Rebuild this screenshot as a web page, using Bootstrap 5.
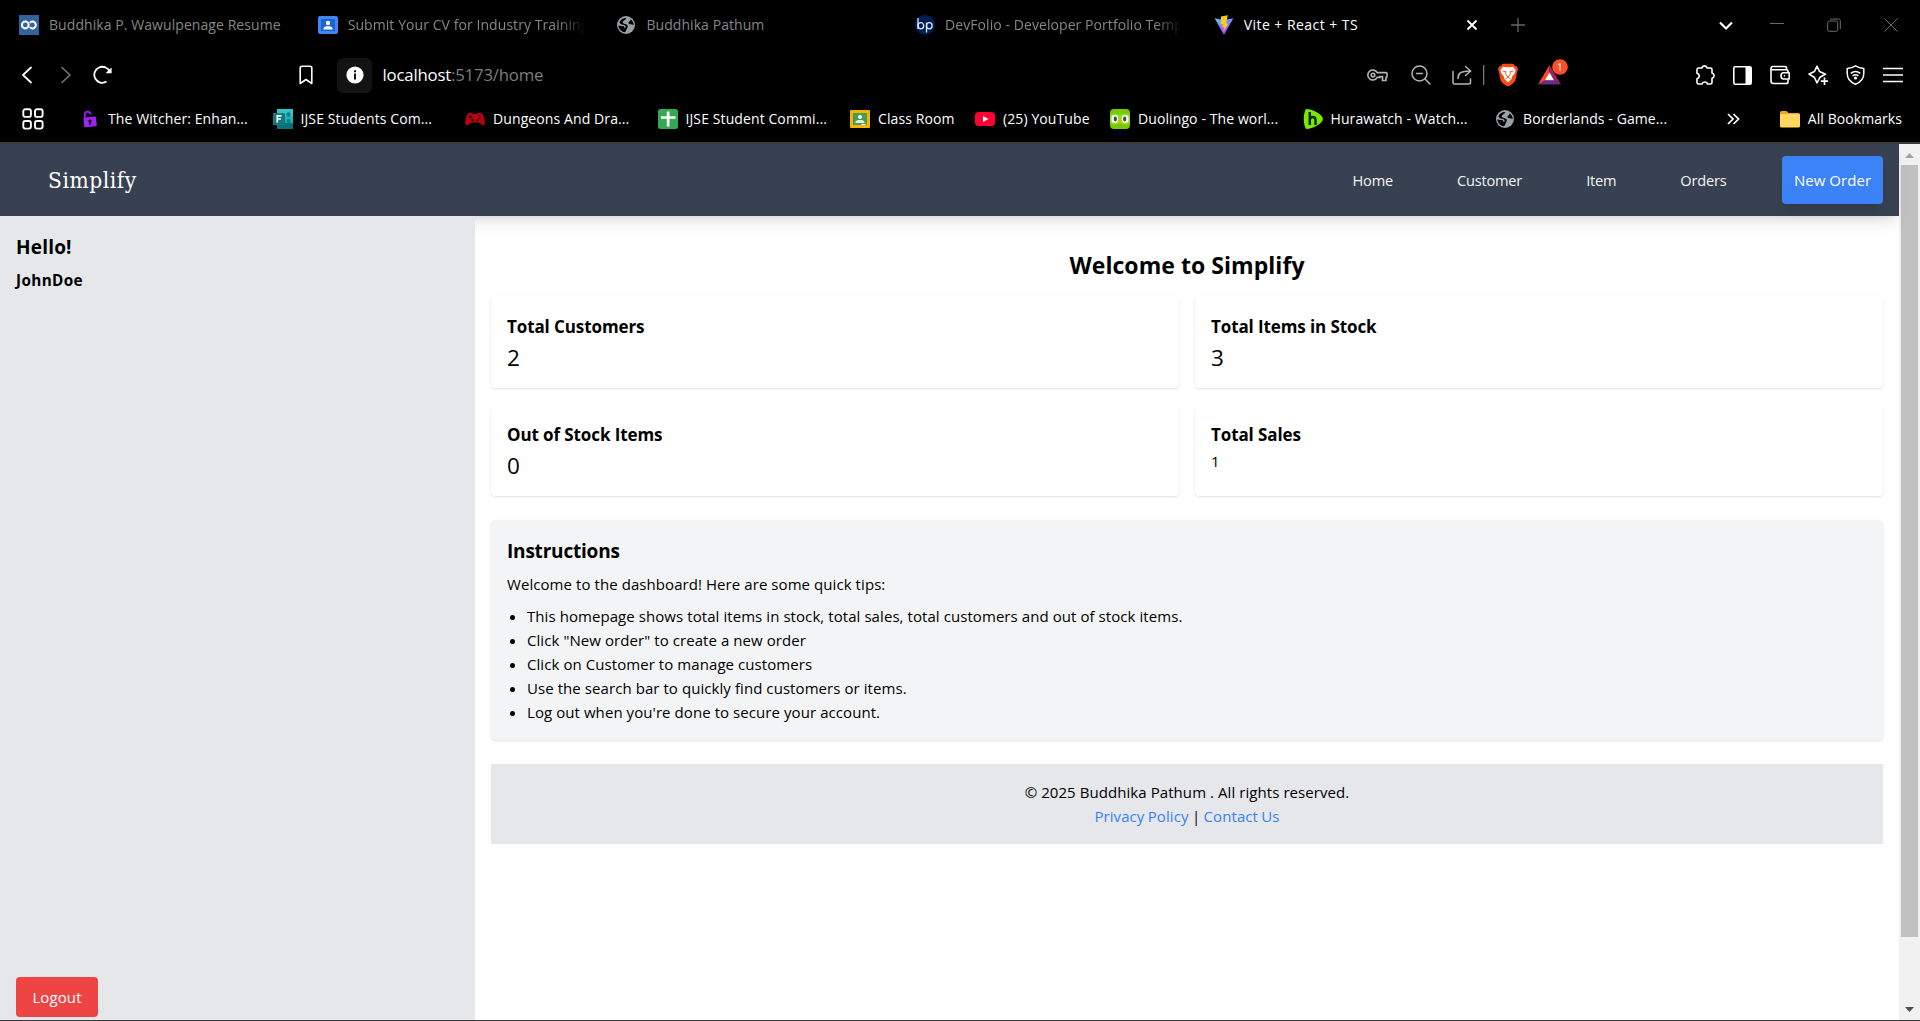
<!DOCTYPE html>
<html lang="en">
<head>
<meta charset="utf-8">
<title>Vite + React + TS</title>
<link rel="stylesheet" href="https://cdn.jsdelivr.net/npm/bootstrap@5.3.0/dist/css/bootstrap.min.css">
<style>
body{font-family:"Open Sans","Noto Sans",sans-serif;font-size:15px;line-height:24px;letter-spacing:.07px;color:#000;background:#fff;height:1021px;overflow:hidden}
svg{display:block;flex:none}
.chrome{height:144px;background:#000;color:#fff;border-bottom:2px solid #3b3b3b;white-space:nowrap}
.tabs{height:48px;padding-left:19px;padding-top:1px}
.tab{width:298.7px;gap:10px;font-size:14px;color:#868686}
.tab-text{width:239px;overflow:hidden}
.tab-active{width:264px;color:#fff}
.tab-active .tab-text{letter-spacing:.45px;width:222px}
.tab-fade{-webkit-mask-image:linear-gradient(90deg,#000 88%,transparent 99%);mask-image:linear-gradient(90deg,#000 88%,transparent 99%)}
.new-tab{margin-left:33px}
.win-controls{gap:43px;padding-right:22px}
.win-chevron{margin-right:-5.5px}
.tools{height:54px;padding:0 17px 0 19px}
.tools-side{gap:18px}
.reload{margin-left:22px}
.save-mark{margin-left:186px}
.siteinfo{width:35px;height:35px;margin-left:24px;border-radius:6px;background:#131313}
.url{margin-left:10.5px;font-size:16.8px;letter-spacing:-.2px;color:#7d7d7d}
.page-actions{margin-right:134px}
.bat-count{left:13.5px;top:-6px}
.marks{height:34px;font-size:14px;padding:0 18px 0 22px}
.bm{width:192.5px;gap:8px}
.bm span{letter-spacing:.1px}
.bm-first{margin-left:36px}
.bm-class{width:125px}
.bm-yt{width:135px}
.folder{margin:0 8px 0 40px}
.topnav{width:1899px;height:72px;background:#374151;padding:0 16px 0 48px;position:relative;z-index:1;box-shadow:0 10px 15px -3px rgba(0,0,0,.1),0 4px 6px -4px rgba(0,0,0,.1)}
.brand{font-family:"DejaVu Serif Condensed","DejaVu Serif",serif;font-stretch:condensed;font-size:22.5px;line-height:32px;letter-spacing:.55px;color:#fff}
.menu{gap:64px;font-size:14.6px;letter-spacing:-.2px}
.menu a{color:#f3f4f6;text-decoration:none}
.menu .order-btn{margin-left:-8.5px;width:101px;height:48px;border-radius:4px;background:#3b82f6;color:#fff;font-size:15px;font-weight:500;letter-spacing:.05px;box-shadow:0 10px 15px -3px rgba(0,0,0,.1),0 4px 6px -4px rgba(0,0,0,.1)}
.sidebar{width:475px;background:#e5e7eb;padding:17px 16px 3px;position:relative;z-index:2}
.hello{font-size:19px;line-height:28px;font-weight:700;letter-spacing:.2px}
.user{font-size:15.3px;font-weight:700;letter-spacing:.35px;margin-top:7px}
.logout{width:82px;height:40px;border-radius:4px;background:#ef4444;color:#fff;border:0;letter-spacing:.1px}
.content{padding:33px 16px 0}
.title{font-size:23px;line-height:32px;font-weight:700;margin-bottom:15px;letter-spacing:.05px}
.stats{display:grid;grid-template-columns:1fr 1fr;gap:16px}
.stat{height:92px;border-radius:4px;padding:17px 16px 15px;background:#fff;box-shadow:0 1px 3px rgba(0,0,0,.1),0 1px 2px -1px rgba(0,0,0,.1)}
.stat-name{font-size:17px;line-height:28px;font-weight:700;letter-spacing:-.1px}
.stat-value{font-size:22.5px;line-height:33px}
.tips{height:220px;margin-top:24px;border-radius:4px;padding:17px 16px 15px;background:#f3f4f6;box-shadow:0 1px 3px rgba(0,0,0,.1),0 1px 2px -1px rgba(0,0,0,.1)}
.tips-title{font-size:19px;line-height:28px;font-weight:700;letter-spacing:-.2px;margin-bottom:7px}
.tips ul{padding-left:20px}
.foot{height:80px;margin-top:24px;background:#e5e7eb}
.foot a{color:#3b82f6;text-decoration:none}
.foot-links{word-spacing:-.6px}
.scroller{width:21px;height:876px;background:#f1f1f1;padding:9px 0 8px}
.thumb{width:17px;height:772px;margin-top:7px;background:#c1c1c1}
.bottom-edge{height:1px;background:#3c3c3c}
</style>
<script src="https://cdn.jsdelivr.net/npm/bootstrap@5.3.0/dist/js/bootstrap.bundle.min.js"></script>
</head>
<body class="d-flex flex-column">
<svg width="0" height="0" class="position-absolute"><defs>
<linearGradient id="vt" x1="0" y1="0" x2=".5" y2="1"><stop offset="0" stop-color="#41d1ff"/><stop offset="1" stop-color="#bd34fe"/></linearGradient>
<symbol id="globe" viewBox="0 0 20 20"><circle cx="10" cy="10" r="9" fill="#9aa0a6"/><path d="M11 3C9.500 3.200 9.800 4.600 8.500 5.200C7 5.800 6.300 6.800 7 8C8 9.500 10.500 8.700 11.500 10.200C12.500 12 10.800 12.800 10.500 14.500C10.300 15.600 9.800 17 8.500 17.200C5 16.500 2.500 13.700 2.400 10.200C4 11 6 10.800 7.800 11.200C8.600 11.500 8 12.800 8.800 13.300L9.800 12C9.500 10 7.500 9.800 5.800 9.600C4.600 9.300 3.800 8.300 3.400 7.200C4.600 4.500 7.500 2.500 11 3ZM14.500 4.200C16.500 5.600 17.800 7.700 17.700 10.200C16.500 9.800 15.500 9.200 14 9.300C12.800 9.200 12 8 12.700 7C13.500 6.200 14.800 5.800 14.500 4.200Z" fill="#000"/></symbol>
</defs></svg>

<header class="chrome flex-shrink-0">
  <div class="tabs d-flex align-items-center">
    <div class="tab d-flex align-items-center"><svg width="20" height="20" viewBox="0 0 20 20"><path fill="#33629e" d="M0 0h20v20H0z"/><g fill="none" stroke="#fff" stroke-width="2"><circle cx="6.300" cy="10" r="3.400"/><path d="M10.800 7.800A3.400 3.400 0 1 1 10.800 12.200"/></g></svg><span class="tab-text">Buddhika P. Wawulpenage Resume</span></div>
    <div class="tab d-flex align-items-center"><svg width="20" height="20" viewBox="0 0 20 20"><rect y="1" width="20" height="18" rx="2" fill="#4285f4"/><path fill="#1967d2" d="M3 4h14v12H3z"/><circle cx="10" cy="8" r="2.200" fill="#fff"/><path d="M5.500 14.500V13.500C5.500 11.800 8 11.200 10 11.200S14.500 11.800 14.500 13.500V14.500Z" fill="#fff"/></svg><span class="tab-text tab-fade">Submit Your CV for Industry Training</span></div>
    <div class="tab d-flex align-items-center"><svg width="20" height="20"><use href="#globe"/></svg><span class="tab-text">Buddhika Pathum</span></div>
    <div class="tab d-flex align-items-center"><svg width="20" height="20" viewBox="0 0 20 20"><circle cx="10" cy="10" r="10" fill="#001e54"/><g fill="none" stroke="#dce8ff" stroke-width="1.300"><path d="M3 3V14"/><ellipse cx="5.900" cy="10.800" rx="2.800" ry="3.100"/><path d="M11.500 7.600V17.500"/><ellipse cx="14.300" cy="10.800" rx="2.800" ry="3.100"/></g></svg><span class="tab-text tab-fade">DevFolio - Developer Portfolio Temp</span></div>
    <div class="tab tab-active d-flex align-items-center"><svg width="20" height="20" viewBox="0 0 20 20"><path d="M.6 3.200L10 20L19.400 3.200L10 5Z" fill="url(#vt)"/><path d="M13.800.2L7 1.600L6.500 9.500L9 9L8.300 12.600L10.500 12L9.200 17L14.500 8.200L12 8.700Z" fill="#ffc920"/></svg><span class="tab-text">Vite + React + TS</span><svg width="12" height="12" viewBox="0 0 12 12" stroke="#fff" stroke-width="1.900"><path d="M1.500 1.500L10.500 10.500M10.500 1.500L1.500 10.500"/></svg></div>
    <svg class="new-tab" width="14" height="14" viewBox="0 0 14 14" stroke="#666" stroke-width="1.300"><path d="M7 0V14M0 7H14"/></svg>
    <div class="win-controls d-flex align-items-center ms-auto">
      <svg class="win-chevron" width="14" height="14" viewBox="0 0 14 14" fill="none" stroke="#fff" stroke-width="2.200"><path d="M1 4.500L7 10.500L13 4.500"/></svg>
      <svg width="14" height="14" viewBox="0 0 14 14" stroke="#6c6c6c"><path d="M0 5.500H14"/></svg>
      <svg width="14" height="14" viewBox="0 0 14 14" fill="none" stroke="#6c6c6c"><rect x=".7" y="3" width="10" height="10.300" rx="1.500"/><path d="M3 1H11.500C12.800 1 13.300 1.700 13.300 2.700V11"/></svg>
      <svg width="14" height="14" viewBox="0 0 14 14" stroke="#6c6c6c"><path d="M.5.500L13.500 13.500M13.500.500L.5 13.500"/></svg>
    </div>
  </div>

  <div class="tools d-flex align-items-center">
    <svg width="14" height="18" viewBox="0 0 14 18" fill="none" stroke="#fff" stroke-width="1.800" stroke-linecap="round" stroke-linejoin="round"><path d="M12 1.500L4 9L12 16.500"/></svg>
    <svg class="ms-4" width="14" height="18" viewBox="0 0 14 18" fill="none" stroke="#777" stroke-width="1.600" stroke-linecap="round" stroke-linejoin="round"><path d="M5 1.500L13 9L5 16.500"/></svg>
    <svg class="reload" width="20" height="20" viewBox="0 0 20 20" fill="none" stroke="#fff" stroke-width="1.800"><path d="M13.500 16.600A8 8 0 1 1 16.800 7"/><path d="M18.600 2.500V8.200H12.500Z" fill="#fff" stroke="none"/></svg>
    <svg class="save-mark" width="14" height="20" viewBox="0 0 14 20" fill="none" stroke="#fff" stroke-width="1.600" stroke-linejoin="round"><path d="M1.200 3Q1.200 1.200 3 1.200H11Q12.800 1.200 12.800 3V18.500L7 14.500L1.200 18.500Z"/></svg>
    <div class="siteinfo d-flex align-items-center justify-content-center"><svg width="18" height="18" viewBox="0 0 18 18"><circle cx="9" cy="9" r="8.600" fill="#fff"/><path d="M8 7.500h2V13.500H8zM8 4.300h2v2H8z" fill="#131313"/></svg></div>
    <span class="url"><span class="text-white">localhost</span>:5173/home</span>

    <div class="page-actions d-flex align-items-center ms-auto">
      <svg width="21" height="14" viewBox="0 0 21 14" fill="none" stroke="#b5b5b5" stroke-width="1.600"><path d="M10.200 4.600A5 5 0 1 0 10.200 9.400H13V8.500H15.500V12.500H19V9.400Q20 9.400 20 8.400V5.600Q20 4.600 19 4.600Z"/><circle cx="6" cy="7" r="1.800"/></svg>
      <svg width="20" height="20" viewBox="0 0 20 20" fill="none" stroke="#b5b5b5" stroke-width="1.500" stroke-linecap="round" style="margin-left:23px"><circle cx="8.500" cy="8.500" r="7.500"/><path d="M14 14L19 19M5.500 8.500H11.500"/></svg>
      <svg width="20" height="20" viewBox="0 0 20 20" fill="none" stroke="#b5b5b5" stroke-width="1.500" stroke-linecap="round" stroke-linejoin="round" style="margin-left:21px"><path d="M1 6.500V17.500Q1 19 2.500 19H16.500Q18.500 19 18.500 17.500V14"/><path d="M6 13.500C6 8 9 6 18.500 6M13.500 1.500L18.700 6L13.500 10.500"/></svg>
      <svg width="2" height="20" viewBox="0 0 2 20" style="margin-left:11px"><path fill="#777" d="M0 0h1.300v20H0z"/></svg>
      <svg width="20" height="24" viewBox="0 0 20 24" style="margin-left:13px"><path d="M5 .8H15L17 3L19 3.400L20 6.500L19.200 8.500L17.500 17C16.800 19.500 13 22 10 23.600C7 22 3.200 19.500 2.500 17L.8 8.500L0 6.500L1 3.400L3 3Z" fill="#fb4a13"/><path d="M5 3.800L8 4.300H12L15 3.800L17.600 7.200L16.500 10.500L13.700 14L14 15.500L12.500 17L10 19.500L7.500 17L6 15.500L6.300 14L3.500 10.500L2.400 7.200Z" fill="#fff"/><path d="M4.500 8L8 8.700L7.500 10.500L8.800 13L10 13.700L11.200 13L12.500 10.500L12 8.700L15.500 8M7.500 15.500L10 14.300L12.500 15.500" fill="none" stroke="#fb4a13" stroke-width=".9"/></svg>
      <div class="position-relative" style="margin-left:20px"><svg width="23" height="20" viewBox="0 0 23 20"><path d="M11.500 0L0 19.500L7.500 15.300L11.500 8Z" fill="#ff4724"/><path d="M11.500 0V8L15.500 15.300L23 19.500Z" fill="#9e1f63"/><path d="M0 19.500H23L15.500 15.300H7.500Z" fill="#662d91"/><path d="M11.500 7.500L16 15.300H7Z" fill="#fff"/></svg>
      <svg class="bat-count position-absolute" width="16" height="16" viewBox="0 0 16 16"><circle cx="8" cy="8" r="7.800" fill="#fb4f2b"/><text x="8" y="11.600" text-anchor="middle" font-size="10" fill="#fff">1</text></svg></div>
    </div>
    <div class="tools-side d-flex align-items-center">
      <svg width="20" height="20" viewBox="0 0 20 20" fill="none" stroke="#fff" stroke-width="1.600" stroke-linejoin="round"><path d="M3.500 3H6.800C7.200 1.500 8.300.9 9.500.9S11.800 1.500 12.200 3H15.500Q17 3 17 4.500V8C18.500 8.400 19.100 9.500 19.100 10.600S18.500 12.800 17 13.200V17.500Q17 19 15.500 19H12.500C12.200 17.600 11 17 9.800 17S7.400 17.600 7 19H3.500Q2 19 2 17.500V13.800C3.500 13.400 4.200 12.300 4.200 11S3.500 8.600 2 8.200V4.500Q2 3 3.500 3Z"/></svg>
      <svg width="19" height="19" viewBox="0 0 19 19"><rect x=".8" y=".8" width="17.400" height="17.400" rx="1.500" fill="none" stroke="#fff" stroke-width="1.600"/><path d="M12.500 1h5.500v17h-5.500z" fill="#fff"/></svg>
      <svg width="20" height="20" viewBox="0 0 20 20" fill="none" stroke="#fff" stroke-width="1.600" stroke-linejoin="round"><path d="M18 7V6Q18 4.800 16.500 4.800H1V16Q1 18.500 3.500 18.500H16Q18 18.500 18 17V14.500M1 4.800V3.500Q1 1.500 3 1.500H14.500Q16.500 1.500 16.500 3V4.500"/><path d="M19.200 7.700H13.500Q11 7.700 11 10.700T13.500 14H19.200ZM13.800 10.800H15"/></svg>
      <svg width="20" height="20" viewBox="0 0 20 20" fill="none" stroke="#fff" stroke-width="1.600" stroke-linejoin="round"><path d="M14 11Q11.500 12 10.800 14.500L9 18L6.500 12.500L1 9L6.500 6.500L9 1.200L11.500 6.500L17.500 9.200Z"/><path d="M16.500 12.500V20M12.800 16.200H20.200" stroke-width="1.700"/></svg>
      <svg width="19" height="20" viewBox="0 0 19 20" fill="none" stroke="#fff" stroke-width="1.500" stroke-linejoin="round"><path d="M9.500.9Q13 3.200 17.800 3.400V8.500C17.800 13.500 14.500 17.200 9.500 19.200C4.500 17.200 1.200 13.500 1.200 8.500V3.400Q6 3.200 9.500.900Z"/><path d="M4.800 8.300Q9.500 4.500 14.200 8.300M6.600 10.800Q9.500 8.500 12.400 10.800"/><circle cx="9.500" cy="13" r=".8" fill="#fff"/></svg>
      <svg width="20" height="16" viewBox="0 0 20 16" stroke="#fff" stroke-width="1.600"><path d="M0 1.500H20M0 8H20M0 14.500H20"/></svg>
    </div>
  </div>

  <div class="marks d-flex align-items-center">
    <svg width="22" height="22" viewBox="0 0 22 22" fill="none" stroke="#fff" stroke-width="1.900"><rect x="1.300" y="1.300" width="7.600" height="7.600" rx="2"/><rect x="13" y="1.300" width="7.600" height="7.600" rx="2"/><rect x="1.300" y="13" width="7.600" height="7.600" rx="2"/><rect x="13" y="13" width="7.600" height="7.600" rx="2"/></svg>
    <div class="bm bm-first d-flex align-items-center"><svg width="20" height="20" viewBox="0 0 20 20"><path d="M4.800 8.500V5.500Q4.800 2.600 7.500 2.600T10.800 5.500" fill="none" stroke="#9d1cf5" stroke-width="1.900"/><rect x="3.800" y="8" width="12.600" height="9.800" rx="1" fill="#a021f7" transform="rotate(-6 10 13)"/><circle cx="10" cy="12" r="1.600"/><path d="M9.200 12h1.600v4H9.200z"/></svg><span>The Witcher: Enhan...</span></div>
    <div class="bm d-flex align-items-center"><svg width="20" height="20" viewBox="0 0 20 20"><path fill="#1fb3b3" d="M4 0h16v20H4z"/><path fill="#36c5c5" d="M4 0h16v7H4z"/><path fill="#0c7177" d="M8 14h12v6H4v-3z"/><circle cx="15.500" cy="5.500" r="2.200" fill="#098086"/><path fill="#13797e" d="M0 4h12v12H0z"/><path d="M4.300 13.500V6.800H8.500M4.300 10H8" fill="none" stroke="#fff" stroke-width="1.700"/><circle cx="15.500" cy="12" r="2" fill="#098086"/></svg><span>IJSE Students Com...</span></div>
    <div class="bm d-flex align-items-center"><svg width="20" height="20" viewBox="0 0 20 20"><path d="M4 4C6.500 3 7.500 5 10 5S13.500 3 16 4C18.500 5 20 11 19.800 14C19.500 17 17.500 17 16 15.300L13.500 13.500H6.500L4 15.300C2.500 17 .5 17 .2 14C0 11 1.500 5 4 4Z" fill="#b5000f"/><path d="M3.800 8H6.800M5.300 6.500V9.500" stroke="#000" stroke-width="1"/><circle cx="14.800" cy="6.800" r=".8"/><circle cx="14.800" cy="9.300" r=".8"/><circle cx="7.500" cy="11" r="1.100"/><circle cx="12.500" cy="11" r="1.100"/></svg><span>Dungeons And Dra...</span></div>
    <div class="bm d-flex align-items-center"><svg width="20" height="20" viewBox="0 0 20 20"><rect width="20" height="20" rx="2.500" fill="#34a853"/><path d="M8.800 2.500h2.700v4.700H17.500v2.500H11.500V17.500H8.800V9.700H3V7.200h5.800z" fill="#fff"/></svg><span>IJSE Student Commi...</span></div>
    <div class="bm bm-class d-flex align-items-center"><svg width="20" height="20" viewBox="0 0 20 20"><rect y="1" width="20" height="18" rx="1" fill="#f4b400"/><path fill="#4b9b58" d="M3 4h14v12H3z"/><circle cx="10" cy="8" r="2" fill="#fff"/><path d="M5.500 14V13C5.500 11.500 8 11 10 11S14.500 11.500 14.500 13V14Z" fill="#e3f0e4"/><path fill="#fff" d="M11.500 15h4v1h-4z"/></svg><span>Class Room</span></div>
    <div class="bm bm-yt d-flex align-items-center"><svg width="20" height="20" viewBox="0 0 20 20"><rect y="3" width="20" height="14" rx="3.500" fill="#ff0033"/><path d="M8 7L13.500 10L8 13Z" fill="#fff"/></svg><span>(25) YouTube</span></div>
    <div class="bm d-flex align-items-center"><svg width="20" height="20" viewBox="0 0 20 20"><rect width="20" height="20" rx="4" fill="#78c800"/><path d="M0 6Q5 3 10 6Q15 3 20 6V14Q15 17 10 14Q5 17 0 14Z" fill="#89e219"/><rect x="1.600" y="6" width="6.500" height="8" rx="3.200" fill="#fff"/><rect x="11.900" y="6" width="6.500" height="8" rx="3.200" fill="#fff"/><ellipse cx="5.300" cy="10" rx="1.700" ry="2.400" fill="#4b4b4b"/><ellipse cx="14.700" cy="10" rx="1.700" ry="2.400" fill="#4b4b4b"/><path d="M8 12.500Q10 11 12 12.500L10 15.500Z" fill="#ffa200"/></svg><span>Duolingo - The worl...</span></div>
    <div class="bm d-flex align-items-center"><svg width="20" height="20" viewBox="0 0 20 20"><path d="M3 0C10 0 20 6 20 10S10 20 3 20C0 15 0 5 3 0Z" fill="#7be800"/><path d="M6.800 3V16M6.800 11Q7 8 9.700 8T12.500 11V16" fill="none" stroke="#0b2a00" stroke-width="2.500"/></svg><span>Hurawatch - Watch...</span></div>
    <div class="bm d-flex align-items-center"><svg width="20" height="20"><use href="#globe"/></svg><span>Borderlands - Game...</span></div>
    <svg class="ms-auto" width="13" height="12" viewBox="0 0 13 12" fill="none" stroke="#fff" stroke-width="1.700"><path d="M1 1L6 6L1 11M6.500 1L11.500 6L6.500 11"/></svg>
    <svg class="folder" width="20" height="18" viewBox="0 0 20 18"><path d="M0 2.500Q0 1 1.500 1H6.500L8.500 3H18.500Q20 3 20 4.500V10H0Z" fill="#e8a91d"/><rect y="4" width="20" height="13.500" rx="1.500" fill="#ffd75e"/></svg><span>All Bookmarks</span>
  </div>
</header>

<div class="d-flex flex-grow-1">
  <div class="d-flex flex-column">
    <nav class="topnav d-flex align-items-center justify-content-between">
      <span class="brand">Simplify</span>
      <div class="menu d-flex align-items-center">
        <a href="#">Home</a><a href="#">Customer</a><a href="#">Item</a><a href="#">Orders</a>
        <a href="#" class="order-btn d-flex align-items-center justify-content-center">New Order</a>
      </div>
    </nav>
    <div class="d-flex flex-grow-1">
      <aside class="sidebar d-flex flex-column">
        <div class="hello">Hello!</div>
        <div class="user">JohnDoe</div>
        <button class="logout mt-auto">Logout</button>
      </aside>
      <main class="content flex-grow-1">
        <h1 class="title text-center">Welcome to Simplify</h1>
        <div class="stats">
          <div class="stat"><div class="stat-name">Total Customers</div><div class="stat-value">2</div></div>
          <div class="stat"><div class="stat-name">Total Items in Stock</div><div class="stat-value">3</div></div>
          <div class="stat"><div class="stat-name">Out of Stock Items</div><div class="stat-value">0</div></div>
          <div class="stat"><div class="stat-name">Total Sales</div><div>1</div></div>
        </div>
        <section class="tips">
          <h2 class="tips-title">Instructions</h2>
          <p class="mb-2">Welcome to the dashboard! Here are some quick tips:</p>
          <ul class="mb-0">
            <li>This homepage shows total items in stock, total sales, total customers and out of stock items.</li>
            <li>Click "New order" to create a new order</li>
            <li>Click on Customer to manage customers</li>
            <li>Use the search bar to quickly find customers or items.</li>
            <li>Log out when you're done to secure your account.</li>
          </ul>
        </section>
        <footer class="foot text-center p-3">
          <div>© 2025 Buddhika Pathum . All rights reserved.</div>
          <div class="foot-links"><a href="#">Privacy Policy</a> | <a href="#">Contact Us</a></div>
        </footer>
      </main>
    </div>
  </div>
  <div class="scroller d-flex flex-column align-items-center">
    <svg width="9" height="5" viewBox="0 0 9 5"><path d="M0 5L4.500 0L9 5Z" fill="#a3a3a3"/></svg>
    <div class="thumb"></div>
    <svg class="mt-auto" width="9" height="5" viewBox="0 0 9 5"><path d="M0 0H9L4.500 5Z" fill="#505050"/></svg>
  </div>
</div>
<div class="bottom-edge flex-shrink-0"></div>
</body>
</html>
